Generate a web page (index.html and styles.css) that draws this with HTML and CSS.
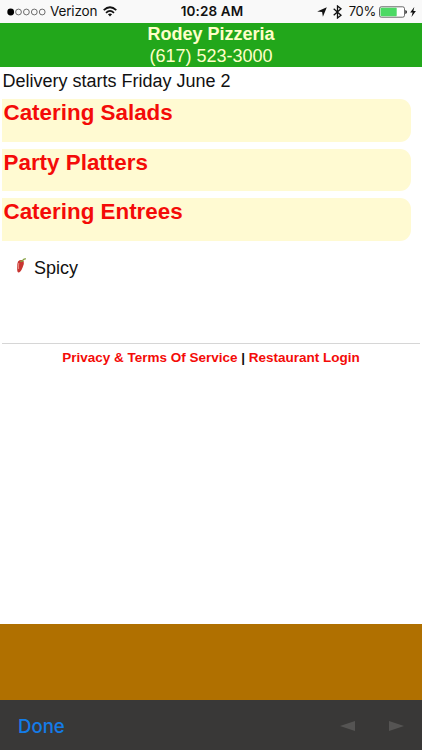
FILE: index.html
```
<!DOCTYPE html>
<html lang="en">
<head>
<meta charset="utf-8">
<title>Rodey Pizzeria</title>
<link rel="stylesheet" href="styles.css">
</head>
<body>
<div class="status">
  <div class="carrier">
    <svg class="signal" width="40" height="10" viewBox="0 0 40 10"><circle cx="3.7" cy="5" r="3.4"/><g fill="none" stroke="#333" stroke-width=".7"><circle cx="11.5" cy="5" r="2.9"/><circle cx="19.4" cy="5" r="2.9"/><circle cx="27.3" cy="5" r="2.9"/><circle cx="35.2" cy="5" r="2.9"/></g></svg>
    <span class="carrier-name">Verizon</span>
    <svg class="wifi" width="14" height="11" viewBox="0 0 14 11"><g fill="none" stroke="#111" stroke-width="1.7"><path d="M.7 4.2Q7-1.7 13.3 4.2"/><path d="M3 6.8Q7 3.1 11 6.8"/></g><path d="M4.9 8.3Q7 6.6 9.1 8.3L7 10.6Z" fill="#111"/></svg>
  </div>
  <div class="clock">10:28 AM</div>
  <div class="indicators">
    <svg class="location" width="10" height="10" viewBox="0 0 10 10"><path d="M9.8.2L5.9 9.8L5.1 5.1L.2 4.4Z" fill="#111"/></svg>
    <svg class="bluetooth" width="9" height="14" viewBox="0 0 9 14"><path d="M.7 3.8L8 10.2L4.5 13V1L8 3.8L.7 10.2" fill="none" stroke="#111" stroke-width="1.3"/></svg>
    <span class="percent">70%</span>
    <svg class="battery" width="28" height="12" viewBox="0 0 28 12"><rect x=".5" y=".8" width="25" height="10.4" rx="1.8" fill="#fff" stroke="#444" stroke-width=".8"/><rect x="1.5" y="1.8" width="16.2" height="8.4" rx=".8" fill="#4cd964"/><path d="M26.3 4Q28 4.4 28 6T26.3 8Z" fill="#222"/></svg>
    <svg class="bolt" width="6" height="10" viewBox="0 0 6 10"><path d="M4.3 0L.2 5.6H2.6L1.5 10L5.9 4.1H3.4Z" fill="#111"/></svg>
  </div>
</div>
<header class="banner">
  <div class="name">Rodey Pizzeria</div>
  <div class="phone">(617) 523-3000</div>
</header>
<main class="content">
  <p class="notice">Delivery starts Friday June 2</p>
  <nav class="menu">
    <a class="category">Catering Salads</a>
    <a class="category">Party Platters</a>
    <a class="category">Catering Entrees</a>
  </nav>
  <div class="legend">
    <svg class="pepper" width="11" height="18" viewBox="0 0 11 18"><path d="M2 4.5Q5 1.7 7.7 4.3Q8.5 6.7 6.6 10.4Q4.7 15.3 2.3 15.6Q1 15 1.2 11Q1 6.5 2 4.5Z" fill="#c83531"/><path d="M2.8 6Q2.1 9 2.6 12" fill="none" stroke="#ed8a80"/><path d="M4.2 4.1Q6.7 4.8 7.4 2.5L9.8 1.6" fill="none" stroke="#829e3c" stroke-width="1.2"/></svg>
    <span>Spicy</span>
  </div>
  <footer class="links"><a>Privacy &amp; Terms Of Service</a> | <a>Restaurant Login</a></footer>
</main>
<div class="ground"></div>
<div class="toolbar">
  <span class="done">Done</span>
  <svg class="arrow" width="15" height="10" viewBox="0 0 15 10"><path d="M0 5L15 0V10Z"/></svg>
  <svg class="arrow" width="15" height="10" viewBox="0 0 15 10"><path d="M15 5L0 0V10Z"/></svg>
</div>
</body>
</html>
```
FILE: styles.css
```
* { box-sizing: border-box; }
body {
  margin: 0;
  width: 422px;
  height: 750px;
  display: flex;
  flex-direction: column;
  overflow: hidden;
  background: #fff;
  color: #111;
  font-family: "Liberation Sans", Arial, sans-serif;
}
svg { display: block; flex: none; }
.status {
  height: 22.5px;
  flex: none;
  display: grid;
  grid-template-columns: 1fr auto 1fr;
  align-items: center;
  padding-top: 1px;
  background: #f9f9f9;
  font: 13.5px/21px Inter, sans-serif;
  white-space: nowrap;
}
.carrier, .indicators { display: flex; align-items: center; }
.carrier { padding-left: 7px; }
.carrier-name { margin: 0 6px 0 3px; letter-spacing: -.15px; }
.clock { padding-left: 2px; font-weight: 600; letter-spacing: .1px; }
.indicators { justify-content: flex-end; padding-right: 6px; }
.bluetooth { margin: 0 7px 0 6px; }
.percent { font-size: 13px; letter-spacing: -.3px; }
.battery { margin: 0 3px 0 3px; }
.banner {
  height: 44.5px;
  flex: none;
  background: #22a71b;
  color: #ffffc8;
  text-align: center;
  font-size: 18px;
  line-height: 22px;
}
.name { font-weight: bold; }
.content { height: 557px; flex: none; padding: 0 2px; }
.notice { margin: 0; height: 32px; padding: 4px 0 0 .5px; font-size: 18px; line-height: 21px; }
.menu { width: 408.5px; display: flex; flex-direction: column; gap: 7px; }
.category {
  height: 42.5px;
  padding: 1px 1.5px;
  border-radius: 0 11px 11px 0;
  background: #fffad2;
  color: #f40b08;
  font-size: 22.4px;
  font-weight: bold;
  line-height: 26px;
}
.legend {
  height: 102.5px;
  padding: 15px 0 0 14px;
  display: flex;
  align-items: flex-start;
  gap: 7px;
  font-size: 18px;
  line-height: 24px;
}
.pepper { margin-top: 1px; }
.links {
  border-top: 1px solid #d6d6d6;
  padding-top: 6px;
  text-align: center;
  font-size: 13.5px;
  line-height: 16px;
  font-weight: bold;
}
.links a { color: #f40b08; }
.ground { height: 76px; flex: none; background: #b07000; }
.toolbar {
  height: 50px;
  flex: none;
  display: flex;
  align-items: center;
  padding: 2px 18px 0;
  background: #393837;
}
.done { margin-right: auto; color: #147ce8; font: 500 18.6px/24px Inter, sans-serif; }
.arrow { fill: #555453; }
.arrow + .arrow { margin-left: 34px; }
```
